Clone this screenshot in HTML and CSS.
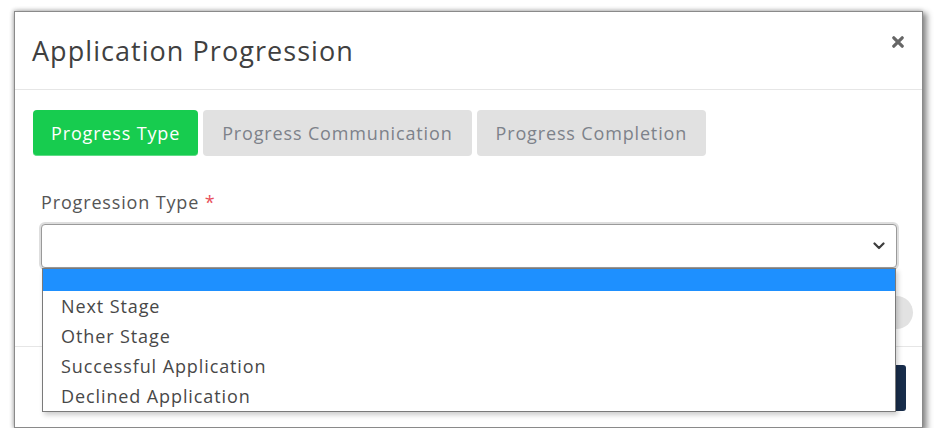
FILE: index.html
```html
<!DOCTYPE html>
<html>
<head>
<meta charset="utf-8">
<link rel="stylesheet" href="styles.css">
</head>
<body>
<div class="frame">
  <div class="header">
    <h1 class="title">Application Progression</h1>
    <svg class="close" width="12" height="12" viewBox="0 0 12 12" aria-label="Close"><path d="M1.8 1.8 L10.2 10.2 M10.2 1.8 L1.8 10.2" stroke="#666" stroke-width="3.2" stroke-linecap="round"/></svg>
  </div>
  <div class="body">
    <div class="tabs">
      <div class="tab active">Progress Type</div>
      <div class="tab">Progress Communication</div>
      <div class="tab">Progress Completion</div>
    </div>
    <div class="field">
      <div class="label">Progression Type <span class="req">*</span></div>
      <div class="select-wrap">
        <div class="select">
          <svg class="chev" width="12" height="8" viewBox="0 0 12 8"><polyline points="1.5,1.5 6,6 10.5,1.5" fill="none" stroke="#3d3d3d" stroke-width="2.2" stroke-linecap="round" stroke-linejoin="round"/></svg>
        </div>
        <ul class="options">
          <li class="opt selected"></li>
          <li class="opt">Next Stage</li>
          <li class="opt">Other Stage</li>
          <li class="opt">Successful Application</li>
          <li class="opt">Declined Application</li>
        </ul>
      </div>
      <div class="toggle-row"><span class="toggle"></span></div>
    </div>
  </div>
  <div class="footer">
    <button class="btn"></button>
  </div>
</div>
</body>
</html>
```

FILE: styles.css
```css
* { box-sizing: border-box; }
html, body { margin: 0; padding: 0; background: #fff; }
body {
  font-family: "Open Sans", "Noto Sans", sans-serif;
  color: #444;
}
.frame {
  margin: 11px 0 0 14px;
  width: 909px;
  height: 417px;
  background: #fff;
  border: 1px solid #8a8a8a;
  box-shadow: 3px 3px 6px 1px rgba(0,0,0,0.45), -1px -1px 4px rgba(0,0,0,0.2);
  display: flex;
  flex-direction: column;
  overflow: hidden;
}
.header {
  height: 78px;
  border-bottom: 1px solid #e6e6e6;
  display: flex;
  align-items: center;
  justify-content: space-between;
  padding: 0 17px 0 17px;
  flex-shrink: 0;
}
.title {
  margin: 0;
  font-weight: 400;
  font-size: 27px;
  letter-spacing: 1.05px;
  color: #404040;
}
.close {
  align-self: flex-start;
  margin-top: 24px;
  margin-right: 1px;
  display: block;
}
.body {
  padding: 20px 25px 0 18px;
  flex: 1;
}
.tabs {
  display: flex;
  gap: 5px;
}
.tab {
  height: 46px;
  display: flex;
  align-items: center;
  padding: 0 19px;
  background: #e1e1e1;
  color: #7d828a;
  border-radius: 4px;
  font-size: 18px;
  letter-spacing: 0.85px;
}
.tab.active {
  background: #17cc4f;
  color: #fff;
  padding: 0 18px;
  border-bottom: 1px solid #5fdc86;
}
.field {
  padding-left: 8px;
  margin-top: 33px;
}
.label {
  font-size: 18px;
  letter-spacing: 0.85px;
  line-height: 26px;
  color: #555;
}
.req { color: #e8505b; }
.select-wrap {
  position: relative;
  margin-top: 9px;
}
.select {
  height: 44px;
  border: 1px solid #9a9a9a;
  border-radius: 4px;
  box-shadow: 0 0 0 2px #dedede;
  display: flex;
  align-items: center;
  justify-content: flex-end;
  padding-right: 11px;
  background: #fff;
}
.chev { display: block; }
.options {
  position: absolute;
  left: 1px;
  right: 1px;
  top: 100%;
  margin: 0;
  padding: 0;
  list-style: none;
  background: #fff;
  border: 1px solid #7a7a7a;
  box-shadow: 2px 3px 5px rgba(0,0,0,0.2);
  z-index: 2;
}
.opt {
  height: 30px;
  line-height: 30px;
  padding-left: 18px;
  font-size: 18px;
  letter-spacing: 0.9px;
  color: #484848;
}
.opt.selected {
  height: 22px;
  background: #1e90ff;
}
.toggle-row {
  display: flex;
  justify-content: flex-end;
  margin-top: 28px;
  margin-right: -16px;
}
.toggle {
  width: 60px;
  height: 33px;
  border-radius: 17px;
  background: #e2e2e2;
}
.footer {
  height: 81px;
  border-top: 1px solid #e6e6e6;
  display: flex;
  justify-content: flex-end;
  align-items: flex-start;
  padding: 18px 16px 0 0;
  flex-shrink: 0;
}
.btn {
  width: 120px;
  height: 46px;
  border: none;
  border-radius: 3px;
  background: #182d4b;
}
```
